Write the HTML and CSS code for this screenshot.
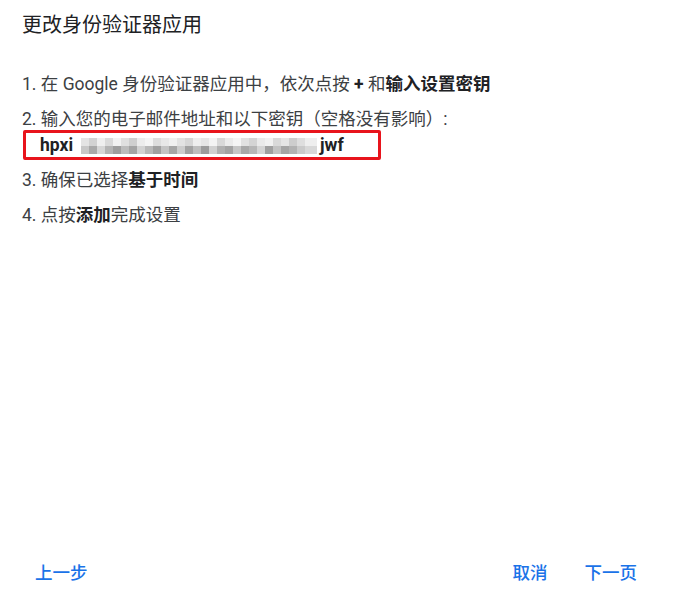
FILE: index.html
```html
<!DOCTYPE html>
<html lang="zh-CN">
<head>
<meta charset="utf-8">
<link rel="stylesheet" href="styles.css">
</head>
<body>
  <div class="dialog">
    <h2 class="title">更改身份验证器应用</h2>

    <ol class="steps">
      <li>1. 在 Google 身份验证器应用中，依次点按 <b>+</b> 和<b>输入设置密钥</b></li>
      <li>2. 输入您的电子邮件地址和以下密钥（空格没有影响）:
        <div class="secret">
          <span>hpxi</span>
          <span class="mosaic"></span>
          <span>jwf</span>
        </div>
      </li>
      <li>3. 确保已选择<b>基于时间</b></li>
      <li>4. 点按<b>添加</b>完成设置</li>
    </ol>

    <div class="footer">
      <span class="textbutton">上一步</span>
      <span class="spacer"></span>
      <span class="textbutton">取消</span>
      <span class="textbutton">下一页</span>
    </div>
  </div>
</body>
</html>
```

FILE: styles.css
```css
/* page base */
body {
    margin: 0;
    background: #ffffff;
    font-family: Roboto, "Noto Sans CJK SC", sans-serif;
    color: #3c4043;
}

* {
    box-sizing: border-box;
}

.dialog {
    display: flex;
    flex-direction: column;
    height: 614px;
    padding-top: 13px;
}

.title {
    margin: 0 0 0 22px;
    font-size: 20px;
    line-height: 24px;
    font-weight: 400;
    color: #202124;
}

/* numbered steps */
.steps {
    list-style: none;
    margin: 35px 0 0 0;
    padding: 0 0 0 22px;
    font-size: 17.5px;
    line-height: 24px;
}

.steps li {
    margin-bottom: 11px;
}

.steps li:nth-child(2) {
    margin-bottom: 8px;
}

.steps b {
    font-weight: 700;
    color: #202124;
}

/* secret key box with red outline */
.secret {
    display: flex;
    align-items: center;
    width: 358px;
    height: 30px;
    margin: -1px 0 0 1px;
    padding-left: 14px;
    border: 3px solid #e8141c;
    border-radius: 2px;
    font-weight: 700;
    color: #202124;
}

/* pixelated part of the key */
.mosaic {
    width: 236px;
    height: 16px;
    margin: 1px 3px 0 8px;
    background:
        linear-gradient(to right,
            #e4e4e4 0 8px, #d2d2d2 8px 16px, #efefef 16px 24px, #dadada 24px 32px,
            #f2f2f2 32px 40px, #e0e0e0 40px 48px, #cfcfcf 48px 56px, #ececec 56px 64px,
            #f4f4f4 64px 72px, #dddddd 72px 80px, #e8e8e8 80px 88px, #f0f0f0 88px 96px,
            #e2e2e2 96px 104px, #d6d6d6 104px 112px, #eeeeee 112px 120px, #e6e6e6 120px 128px,
            #f3f3f3 128px 136px, #d8d8d8 136px 144px, #ebebeb 144px 152px, #f5f5f5 152px 160px,
            #e1e1e1 160px 168px, #d4d4d4 168px 176px, #eaeaea 176px 184px, #f1f1f1 184px 192px,
            #d9d9d9 192px 200px, #e5e5e5 200px 208px, #cdcdcd 208px 216px, #dedede 216px 224px,
            #eeeeee 224px 236px) top / 100% 8px no-repeat,
        linear-gradient(to right,
            #c8c8c8 0 8px, #a9a9a9 8px 16px, #d6d6d6 16px 24px, #b4b4b4 24px 32px,
            #9e9e9e 32px 40px, #bcbcbc 40px 48px, #a4a4a4 48px 56px, #d2d2d2 56px 64px,
            #b8b8b8 64px 72px, #a0a0a0 72px 80px, #c4c4c4 80px 88px, #a6a6a6 88px 96px,
            #cccccc 96px 104px, #a2a2a2 104px 112px, #bebebe 112px 120px, #9c9c9c 120px 128px,
            #d0d0d0 128px 136px, #b0b0b0 136px 144px, #a3a3a3 144px 152px, #c6c6c6 152px 160px,
            #a8a8a8 160px 168px, #b6b6b6 168px 176px, #d4d4d4 176px 184px, #9f9f9f 184px 192px,
            #c2c2c2 192px 200px, #a5a5a5 200px 208px, #b2b2b2 208px 216px, #cacaca 216px 224px,
            #d8d8d8 224px 236px) bottom / 100% 8px no-repeat;
}

/* bottom action row */
.footer {
    display: flex;
    align-items: center;
    gap: 37px;
    margin-top: auto;
    padding: 0 36px 29px 35px;
}

.spacer {
    flex: 1;
}

.textbutton {
    font-size: 17.5px;
    line-height: 24px;
    font-weight: 500;
    color: #1a73e8;
    cursor: pointer;
}
```
